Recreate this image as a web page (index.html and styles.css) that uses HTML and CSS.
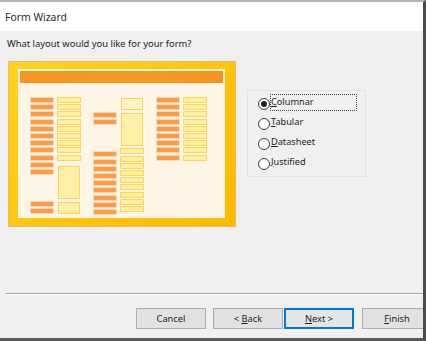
FILE: index.html
```html
<!DOCTYPE html>
<html lang="en">
<head>
  <meta charset="UTF-8">
  <meta name="viewport" content="width=device-width, initial-scale=1.0">
  <title>Form Wizard</title>
  <link rel="stylesheet" href="styles.css">
</head>
<body>
  <div class="window">
    <div class="titlebar">Form Wizard</div>

    <div class="content">
      <p class="question">What layout would you like for your form?</p>

      <div class="main">
        <!-- preview of the columnar layout -->
        <div class="thumb">
          <div class="sheet">
            <div class="sheet-head"></div>
            <div class="sheet-body">
              <div class="pair">
                <div class="col">
                  <i class="lbl"></i><i class="lbl"></i><i class="lbl"></i><i class="lbl"></i>
                  <i class="lbl"></i><i class="lbl"></i><i class="lbl"></i><i class="lbl"></i>
                  <i class="lbl"></i><i class="lbl"></i><i class="lbl"></i>
                  <i class="lbl push-1"></i><i class="lbl"></i>
                </div>
                <div class="col">
                  <i class="fld"></i><i class="fld"></i><i class="fld"></i><i class="fld"></i>
                  <i class="fld"></i><i class="fld"></i><i class="fld"></i><i class="fld"></i>
                  <i class="fld"></i>
                  <i class="box box-tall"></i>
                  <i class="box box-short"></i>
                </div>
              </div>
              <div class="pair">
                <div class="col">
                  <i class="lbl push-2"></i><i class="lbl"></i>
                  <i class="lbl push-3"></i><i class="lbl"></i><i class="lbl"></i><i class="lbl"></i>
                  <i class="lbl"></i><i class="lbl"></i><i class="lbl"></i><i class="lbl"></i><i class="lbl"></i>
                </div>
                <div class="col">
                  <i class="box box-pale"></i>
                  <i class="box box-mid"></i>
                  <i class="fld"></i><i class="fld"></i><i class="fld"></i><i class="fld"></i>
                  <i class="fld"></i><i class="fld"></i><i class="fld"></i><i class="fld"></i><i class="fld"></i>
                </div>
              </div>
              <div class="pair">
                <div class="col">
                  <i class="lbl"></i><i class="lbl"></i><i class="lbl"></i><i class="lbl"></i>
                  <i class="lbl"></i><i class="lbl"></i><i class="lbl"></i><i class="lbl"></i><i class="lbl"></i>
                </div>
                <div class="col">
                  <i class="fld"></i><i class="fld"></i><i class="fld"></i><i class="fld"></i>
                  <i class="fld"></i><i class="fld"></i><i class="fld"></i><i class="fld"></i><i class="fld"></i>
                </div>
              </div>
            </div>
          </div>
        </div>

        <div class="options">
          <label class="option focused"><span class="radio checked"></span><span class="text"><u>C</u>olumnar</span></label>
          <label class="option"><span class="radio"></span><span class="text"><u>T</u>abular</span></label>
          <label class="option"><span class="radio"></span><span class="text"><u>D</u>atasheet</span></label>
          <label class="option"><span class="radio"></span><span class="text"><u>J</u>ustified</span></label>
        </div>
      </div>

      <div class="separator"></div>

      <div class="buttons">
        <button class="btn">Cancel</button>
        <button class="btn btn-back">&lt; <u>B</u>ack</button>
        <button class="btn btn-next"><u>N</u>ext &gt;</button>
        <button class="btn btn-finish"><u>F</u>inish</button>
      </div>
    </div>
  </div>
</body>
</html>
```

FILE: styles.css
```css
body {
  margin: 0;
  background: #f0f0f0;
  font-family: "Noto Sans", "Open Sans", sans-serif;
  color: #1e1e1e;
}

.window {
  height: 341px;
  box-sizing: border-box;
  border-top: 2px solid #b4b4b4;
  border-right: 3px solid #4a4a4a;
  border-bottom: 3px solid #5a5a5a;
  display: flex;
  flex-direction: column;
  overflow: hidden;
}

.titlebar {
  height: 29px;
  background: #fff;
  padding-left: 5px;
  display: flex;
  align-items: center;
  font-size: 10.4px;
  color: #2b2b2b;
}

.content {
  flex: 1;
  display: flex;
  flex-direction: column;
  overflow: hidden;
}

.question {
  margin: 6px 0 0 7px;
  font-size: 9.4px;
  line-height: 14px;
}

.main {
  display: flex;
  align-items: flex-start;
  margin-top: 10px;
  padding-left: 8px;
}

/* layout preview */
.thumb {
  width: 228px;
  height: 166px;
  box-sizing: border-box;
  border: 1px solid #f6b36c;
  padding: 7px 10px 8px 9px;
  background: linear-gradient(135deg, #ffd224, #ffc40a 60%, #fcba00);
}

.sheet {
  height: 100%;
  box-sizing: border-box;
  border: 1px solid #fff6dc;
  background: #fdf5e5;
}

.sheet-head {
  height: 12px;
  margin: 1px 1px 0;
  background: linear-gradient(90deg, #f7951f, #f89a28 60%, #f7931d);
}

.sheet-body {
  display: flex;
  gap: 14px;
  padding: 15px 0 0 12px;
}

.pair {
  display: flex;
  gap: 5px;
}

.col {
  width: 22px;
  display: flex;
  flex-direction: column;
  gap: 3.2px;
}

.col i {
  display: block;
  box-sizing: border-box;
}

.lbl {
  height: 4px;
  background: #fc9c4a;
  box-shadow: 0 0 0 0.5px #fdb57c;
}

.fld {
  height: 4px;
  background: #fff0a0;
  box-shadow: 0 0 0 1px #fbd55e;
}

.box {
  border: 1px solid #f9d35f;
  background: #fff0a6;
}

.box-tall { height: 33px; margin-top: 3px; }
.box-short { height: 12px; }
.box-pale { height: 12px; background: #fff4c6; }
.box-mid { height: 33px; }

.push-1 { margin-top: 25px; }
.push-2 { margin-top: 15px; }
.push-3 { margin-top: 25px; }

/* option group */
.options {
  width: 119px;
  height: 87px;
  box-sizing: border-box;
  margin: 29px 0 0 11px;
  border: 1px solid #e3e3e3;
  padding: 3px 0 0 10px;
  display: flex;
  flex-direction: column;
}

.option {
  display: flex;
  align-items: center;
  height: 20px;
  font-size: 9.2px;
}

.radio {
  flex: none;
  width: 12px;
  height: 12px;
  box-sizing: border-box;
  border: 1px solid #3a3a3a;
  border-radius: 50%;
  background: #fff;
  display: flex;
  align-items: center;
  justify-content: center;
}

.radio.checked::after {
  content: "";
  width: 6px;
  height: 6px;
  border-radius: 50%;
  background: #222;
}

.option .text {
  width: 87px;
  height: 17px;
  box-sizing: border-box;
  line-height: 14px;
  margin-top: -4px;
  border: 1px solid transparent;
}

.option.focused .text {
  border: 1px dotted #444;
}

/* footer */
.separator {
  margin: 66px 0 0 6px;
  height: 1px;
  border-top: 1px solid #a0a0a0;
  background: #fff;
}

.buttons {
  display: flex;
  margin: 13px 0 0 136px;
}

.btn {
  flex: none;
  width: 70px;
  height: 21px;
  padding: 0;
  border: 1px solid #adadad;
  background: #e1e1e1;
  font-family: "Noto Sans", "Open Sans", sans-serif;
  font-size: 9.3px;
  color: #1e1e1e;
}

.btn-back { margin-left: 7px; }
.btn-next {
  margin-left: 1px;
  border: 2px solid #0078d7;
  background: #e5e5e5;
}
.btn-finish { margin-left: 8px; }
```
